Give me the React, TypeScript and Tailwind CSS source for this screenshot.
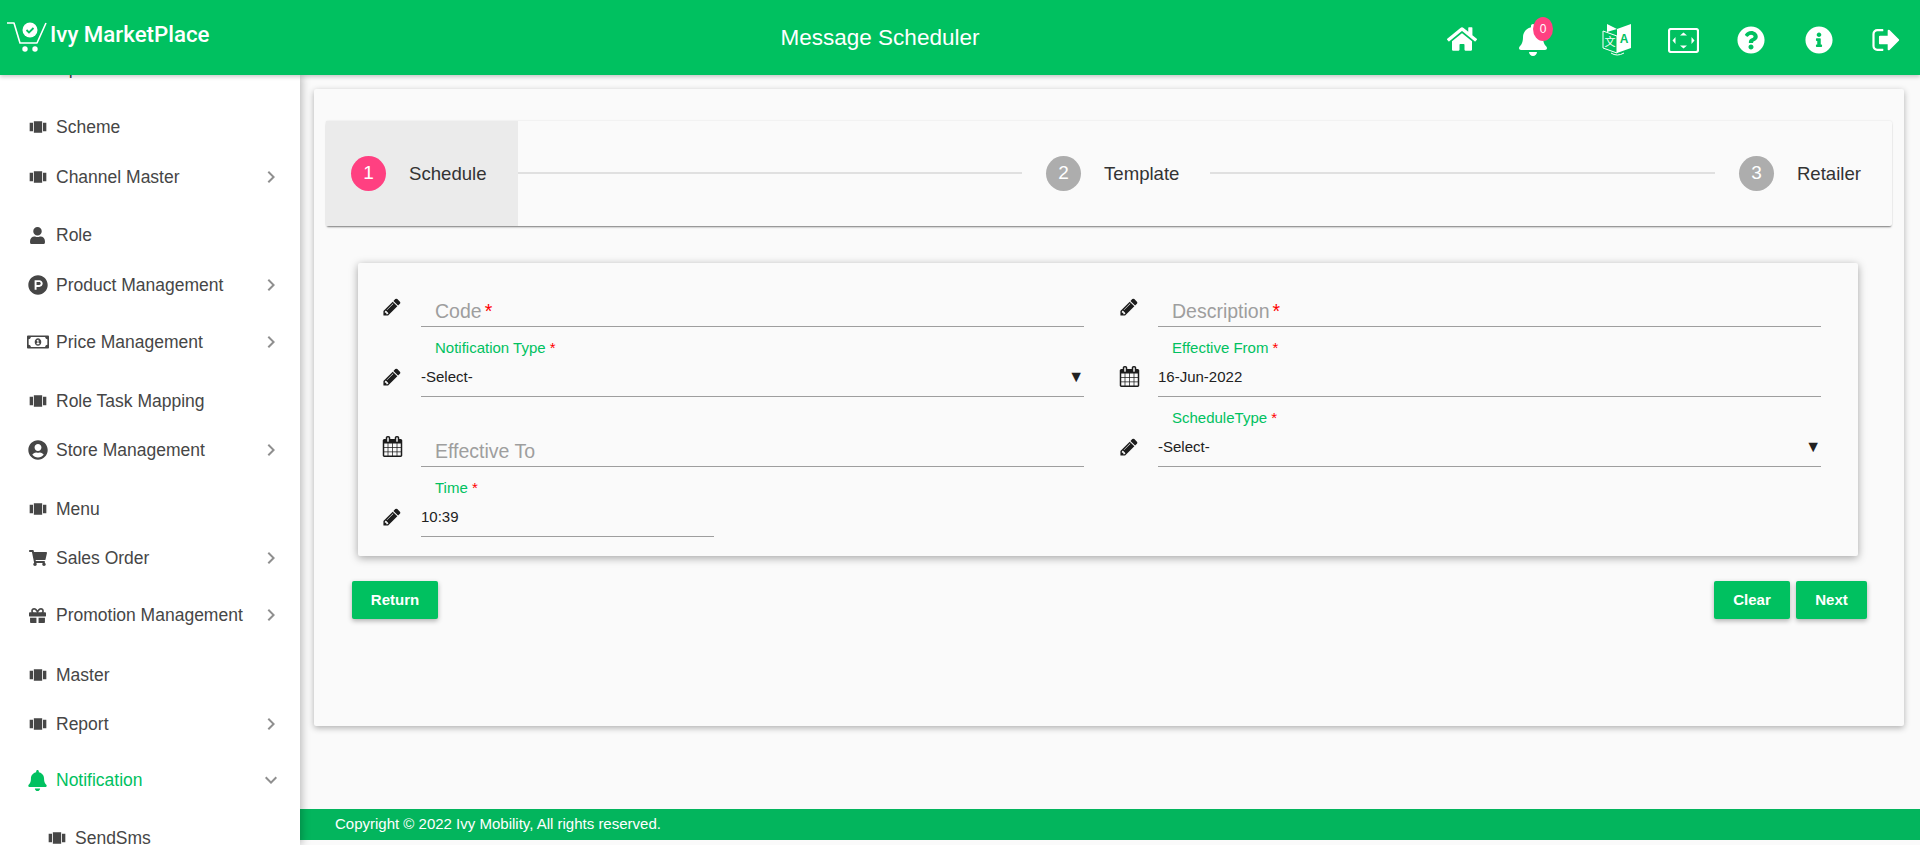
import { ReactNode } from 'react'
import { MdViewCarousel, MdKeyboardArrowRight, MdKeyboardArrowDown } from 'react-icons/md'
import {
    FaHome, FaBell, FaQuestionCircle, FaInfoCircle, FaUser, FaProductHunt,
    FaRegMoneyBillAlt, FaUserCircle, FaShoppingCart, FaGift,
} from 'react-icons/fa'

const Pencil = () => (
    <svg viewBox="0 0 1792 1792" className="w-[20px] h-[20px]" fill="#1c1c1c">
        <path d="M491 1536l91-91-235-235-91 91v107h128v128h107zm523-928q0-22-22-22-10 0-17 7l-542 542q-7 7-7 17 0 22 22 22 10 0 17-7l542-542q7-7 7-17zm-54-192l416 416-832 832h-416v-416zm683 96q0 53-37 90l-166 166-416-416 166-165q36-38 90-38 53 0 91 38l235 234q37 39 37 91z" />
    </svg>
)

const Calendar = () => (
    <svg viewBox="0 0 1792 1792" className="w-[21px] h-[21px]" fill="#1c1c1c">
        <path d="M192 1664h288v-288h-288v288zm352 0h320v-288h-320v288zm-352-352h288v-320h-288v320zm352 0h320v-320h-320v320zm-352-384h288v-288h-288v288zm736 736h320v-288h-320v288zm-384-736h320v-288h-320v288zm768 736h288v-288h-288v288zm-384-352h320v-320h-320v320zm-352-864v-288q0-13-9.5-22.5t-22.5-9.5h-64q-13 0-22.5 9.5t-9.5 22.5v288q0 13 9.5 22.5t22.5 9.5h64q13 0 22.5-9.5t9.5-22.5zm736 864h288v-320h-288v320zm-384-384h320v-288h-320v288zm384 0h288v-288h-288v288zm32-480v-288q0-13-9.5-22.5t-22.5-9.5h-64q-13 0-22.5 9.5t-9.5 22.5v288q0 13 9.5 22.5t22.5 9.5h64q13 0 22.5-9.5t9.5-22.5zm384-64v1280q0 52-38 90t-90 38h-1408q-52 0-90-38t-38-90v-1280q0-52 38-90t90-38h128v-96q0-66 47-113t113-47h64q66 0 113 47t47 113v96h384v-96q0-66 47-113t113-47h64q66 0 113 47t47 113v96h128q52 0 90 38t38 90z" />
    </svg>
)

const SignOut = () => (
    <svg viewBox="0 0 1664 1408" className="w-[29px] h-[24px]" fill="white">
        <path transform="translate(0 -192)" d="M704 1440q0 4 1 20t.5 26.5-3 23.5-10 19.5-20.5 6.5h-320q-119 0-203.5-84.5t-84.5-203.5v-704q0-119 84.5-203.5t203.5-84.5h320q13 0 22.5 9.5t9.5 22.5q0 4 1 20t.5 26.5-3 23.5-10 19.5-20.5 6.5h-320q-66 0-113 47t-47 113v704q0 66 47 113t113 47h312l11.5 1 11.5 3 8 5.5 7 9 2 13.5zm928-544q0 26-19 45l-544 544q-19 19-45 19t-45-19-19-45v-288h-448q-26 0-45-19t-19-45v-384q0-26 19-45t45-19h448v-288q0-26 19-45t45-19 45 19l544 544q19 19 19 45z" />
    </svg>
)

const CartLogo = () => (
    <svg viewBox="0 0 42 32" className="w-[42px] h-[32px]" fill="none">
        <path d="M1 2h7l6 20h17L40 2" stroke="white" strokeWidth="1.6" strokeLinejoin="round" />
        <circle cx="24" cy="9" r="7.5" fill="white" />
        <path d="M20.5 9l2.5 2.5 4.5-4.5" stroke="#00c160" strokeWidth="1.8" />
        <circle cx="19" cy="28" r="2.7" fill="white" />
        <circle cx="29" cy="28" r="2.7" fill="white" />
    </svg>
)

const TranslateIcon = () => (
    <svg viewBox="0 0 30 34" className="w-[30px] h-[34px]" fill="none">
        <path d="M1 8l14 5v17L1 25z" stroke="white" strokeWidth="1" />
        <path d="M15 6l14-5v24l-14 5z" fill="white" />
        <path d="M5 1l10 5-10 3z" fill="white" />
        <path d="M9 30q6 4 13 0" stroke="white" strokeWidth="1" />
        <text x="8" y="23" textAnchor="middle" fontSize="11" fill="white" fontFamily="'Noto Sans CJK SC', sans-serif">文</text>
        <text x="22" y="20" textAnchor="middle" fontSize="12" fontWeight="700" fill="#00c160" fontFamily="'Liberation Sans', sans-serif">A</text>
    </svg>
)

const FullscreenIcon = () => (
    <svg viewBox="0 0 31 25" className="w-[31px] h-[25px]" fill="white">
        <rect x="1" y="1" width="29" height="23" rx="2" fill="none" stroke="white" strokeWidth="2.2" />
        <path d="M15.5 4.5l3.5 3h-7zM15.5 20.5l3.5-3h-7zM4.5 12.5l3-3.5v7zM26.5 12.5l-3-3.5v7z" />
    </svg>
)

const arrayIcon = <MdViewCarousel size={20} />

const menu: { label: string; icon: ReactNode; gap: string; arrow?: 'right' | 'down'; active?: boolean; sub?: boolean }[] = [
    { label: 'Upload', icon: arrayIcon, gap: '-mt-[27px]' },
    { label: 'Scheme', icon: arrayIcon, gap: 'mt-[19px]' },
    { label: 'Channel Master', icon: arrayIcon, gap: 'mt-[10px]', arrow: 'right' },
    { label: 'Role', icon: <FaUser size={17} />, gap: 'mt-[18px]' },
    { label: 'Product Management', icon: <FaProductHunt size={20} />, gap: 'mt-[10px]', arrow: 'right' },
    { label: 'Price Management', icon: <FaRegMoneyBillAlt size={22} />, gap: 'mt-[17px]', arrow: 'right' },
    { label: 'Role Task Mapping', icon: arrayIcon, gap: 'mt-[19px]' },
    { label: 'Store Management', icon: <FaUserCircle size={20} />, gap: 'mt-[9px]', arrow: 'right' },
    { label: 'Menu', icon: arrayIcon, gap: 'mt-[19px]' },
    { label: 'Sales Order', icon: <FaShoppingCart size={18} />, gap: 'mt-[9px]', arrow: 'right' },
    { label: 'Promotion Management', icon: <FaGift size={17} />, gap: 'mt-[17px]', arrow: 'right' },
    { label: 'Master', icon: arrayIcon, gap: 'mt-[20px]' },
    { label: 'Report', icon: arrayIcon, gap: 'mt-[9px]', arrow: 'right' },
    { label: 'Notification', icon: <FaBell size={21} />, gap: 'mt-[16px]', arrow: 'down', active: true },
    { label: 'SendSms', icon: arrayIcon, gap: 'mt-[18px]', sub: true },
]

function Field({ icon, label, value, placeholder, arrow, narrow }: {
    icon: ReactNode
    label?: string
    value?: string
    placeholder?: string
    arrow?: boolean
    narrow?: boolean
}) {
    return (
        <div className="flex items-end">
            <div className="w-[39px] h-[40px] pb-[1px] flex items-center shrink-0">{icon}</div>
            <div className={`${narrow ? 'w-[293px]' : 'flex-1'} border-b border-[#9e9e9e]`}>
                {label && (
                    <div className="h-[22px] pl-[14px] text-[15px] leading-[24px] text-[#00c160]">
                        {label} <span className="text-[#ff0000]">*</span>
                    </div>
                )}
                {placeholder ? (
                    <div className="h-[30px] pl-[14px] text-[19.5px] leading-[30px] text-[#9e9e9e]">
                        {placeholder}
                        {placeholder !== 'Effective To' && <span className="ml-[3px] text-[#ff0000]">*</span>}
                    </div>
                ) : (
                    <div className="h-[38px] flex items-center justify-between text-[15px] text-[#212121]">
                        <span>{value}</span>
                        {arrow && <span className="text-[16px] leading-none">▼</span>}
                    </div>
                )}
            </div>
        </div>
    )
}

function Step({ n, label, active, left = 'pl-6' }: { n: number; label: string; active?: boolean; left?: string }) {
    return (
        <div className={`h-full flex items-center shrink-0 ${left} pr-[31px] ${active ? 'bg-[#ebebeb]' : ''}`}>
            <div className={`w-[35px] h-[35px] rounded-full flex items-center justify-center text-white text-[19px] ${active ? 'bg-[#ff4081]' : 'bg-[#adadad]'}`}>
                {n}
            </div>
            <div className="ml-[23px] text-[18.6px] text-[#333333]">{label}</div>
        </div>
    )
}

export default function App() {
    return (
        <div className="h-[845px] flex flex-col overflow-hidden bg-[#fafafa] font-['Liberation_Sans',Arial,sans-serif]">
            {/* Header */}
            <header className="h-[75px] shrink-0 bg-[#00c160] text-white flex items-center relative z-20 shadow-[0_2px_4px_rgba(0,0,0,0.2)]">
                <div className="w-[780px] shrink-0 flex items-center pl-[6px] pb-[1px]">
                    <CartLogo />
                    <span className="ml-[2px] mb-[4px] text-[22.3px] font-medium font-['Roboto',sans-serif]">Ivy MarketPlace</span>
                </div>
                <div className="w-[200px] text-center text-[22.5px] whitespace-nowrap">Message Scheduler</div>
                <div className="flex-1 relative h-full">
                    <div className="absolute left-[467px] top-[24px]"><FaHome size={30} /></div>
                    <div className="absolute left-[537px] top-[24px]"><FaBell size={32} /></div>
                    <div className="absolute left-[553px] top-[17px] w-[20px] h-[24px] rounded-[50%] bg-[#ff4081] text-[12px] flex items-center justify-center">0</div>
                    <div className="absolute left-[622px] top-[23px]"><TranslateIcon /></div>
                    <div className="absolute left-[688px] top-[28px]"><FullscreenIcon /></div>
                    <div className="absolute left-[757px] top-[26px]"><FaQuestionCircle size={28} /></div>
                    <div className="absolute left-[825px] top-[26px]"><FaInfoCircle size={28} /></div>
                    <div className="absolute left-[891px] top-[28px]"><SignOut /></div>
                </div>
            </header>

            <div className="flex-1 flex min-h-0">
                {/* Sidebar */}
                <aside className="w-[300px] shrink-0 bg-white overflow-hidden relative z-10 shadow-[2px_0_8px_rgba(0,0,0,0.25)]">
                    {menu.map((item) => (
                        <div
                            key={item.label}
                            className={`h-[40px] flex items-center ${item.gap} ${item.sub ? 'pl-[45px]' : 'pl-[26px]'} ${item.active ? 'text-[#00c160]' : 'text-[#464646]'}`}
                        >
                            <span className="w-[23px] flex justify-center shrink-0">{item.icon}</span>
                            <span className="ml-[7px] text-[17.5px] whitespace-nowrap">{item.label}</span>
                            {item.arrow === 'right' && (
                                <MdKeyboardArrowRight size={24} className="ml-auto mr-[17px] text-[#8f8f8f]" />
                            )}
                            {item.arrow === 'down' && (
                                <MdKeyboardArrowDown size={24} className="ml-auto mr-[17px] text-[#8f8f8f]" />
                            )}
                        </div>
                    ))}
                </aside>

                {/* Main */}
                <main className="flex-1 min-w-0 flex flex-col">
                    <div className="flex-1 pl-[14px] pr-[16px] pt-[14px]">
                        <div className="h-[637px] bg-[#fafafa] rounded-[2px] px-[12px] pt-[32px] shadow-[0_2px_6px_rgba(0,0,0,0.3)]">
                            {/* Stepper */}
                            <div className="h-[105px] flex items-center rounded-[2px] shadow-[0_2px_2px_-1px_rgba(0,0,0,0.5),0_0_2px_rgba(0,0,0,0.12)]">
                                <Step n={1} label="Schedule" active left="pl-[25px]" />
                                <div className="flex-1 h-[2px] bg-[#e0e0e0] -mt-[2px]" />
                                <Step n={2} label="Template" />
                                <div className="flex-1 h-[2px] bg-[#e0e0e0] -mt-[2px]" />
                                <Step n={3} label="Retailer" />
                            </div>

                            {/* Form */}
                            <div className="mt-[37px] ml-[32px] mr-[34px] h-[293px] rounded-[2px] pl-[24px] grid grid-cols-[702px_702px] grid-rows-[64px_70px_70px_70px] gap-x-[35px] shadow-[0_2px_8px_rgba(0,0,0,0.35)]">
                                <Field icon={<Pencil />} placeholder="Code" />
                                <Field icon={<Pencil />} placeholder="Description" />
                                <Field icon={<Pencil />} label="Notification Type" value="-Select-" arrow />
                                <Field icon={<Calendar />} label="Effective From" value="16-Jun-2022" />
                                <Field icon={<Calendar />} placeholder="Effective To" />
                                <Field icon={<Pencil />} label="ScheduleType" value="-Select-" arrow />
                                <Field icon={<Pencil />} label="Time" value="10:39" narrow />
                            </div>

                            {/* Actions */}
                            <div className="mt-[25px] ml-[26px] mr-[25px] flex items-center">
                                <button className="h-[38px] w-[86px] rounded-[2px] bg-[#00c160] text-white text-[15px] font-bold shadow-[0_2px_5px_rgba(0,0,0,0.3)]">Return</button>
                                <button className="ml-auto h-[38px] w-[76px] rounded-[2px] bg-[#00c160] text-white text-[15px] font-bold shadow-[0_2px_5px_rgba(0,0,0,0.3)]">Clear</button>
                                <button className="ml-[6px] h-[38px] w-[71px] rounded-[2px] bg-[#00c160] text-white text-[15px] font-bold shadow-[0_2px_5px_rgba(0,0,0,0.3)]">Next</button>
                            </div>
                        </div>
                    </div>

                    {/* Footer */}
                    <footer className="h-[31px] mb-[5px] shrink-0 bg-[#03b55d] text-white text-[15px] flex items-center pl-[35px]">
                        Copyright © 2022 Ivy Mobility, All rights reserved.
                    </footer>
                </main>
            </div>
        </div>
    )
}
